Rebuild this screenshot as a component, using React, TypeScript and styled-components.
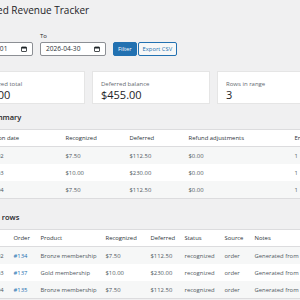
import React from 'react'
import styled, { createGlobalStyle } from 'styled-components'

const GlobalStyle = createGlobalStyle`
  html, body {
    margin: 0;
    padding: 0;
    background: #f0f0f1;
    overflow: hidden;
  }
  body {
    font-family: "Open Sans", "Noto Sans", sans-serif;
    color: #3c434a;
  }
`

const Wrap = styled.div`
  width: 380px;
  margin-left: -33px;
  padding-top: 3px;
`

const Title = styled.h1`
  margin: 0;
  font-size: 10px;
  line-height: 14px;
  font-weight: 400;
  color: #1d2327;
`

const FilterBar = styled.form`
  display: flex;
  align-items: flex-end;
  gap: 7px;
  margin-top: 15px;
`

const Field = styled.label`
  display: flex;
  flex-direction: column;
  gap: 2px;
  font-size: 6px;
  line-height: 8px;
  color: #1d2327;
`

const DateBox = styled.div`
  box-sizing: border-box;
  width: 66px;
  height: 14px;
  display: flex;
  align-items: center;
  justify-content: space-between;
  padding: 0 5px;
  background: #fff;
  border: 1px solid #8c8f94;
  border-radius: 2px;
  font-size: 6.6px;
  color: #2c3338;
`

const Buttons = styled.div`
  display: flex;
  gap: 1px;
`

const Button = styled.button<{ $primary?: boolean }>`
  box-sizing: border-box;
  height: 14px;
  padding: 0 4px;
  font-family: inherit;
  font-size: 5.8px;
  border-radius: 2px;
  border: 1px solid #2271b1;
  background: ${p => (p.$primary ? '#2271b1' : '#f6f7f7')};
  color: ${p => (p.$primary ? '#fff' : '#2271b1')};
`

const Cards = styled.div`
  display: grid;
  grid-template-columns: repeat(3, 118px);
  gap: 7px;
  margin-top: 15px;
`

const Card = styled.div`
  background: #fff;
  border: 1px solid #e5e5e5;
  padding: 8px 8px 0;
  height: 33px;
  box-sizing: border-box;
`

const CardLabel = styled.div`
  font-size: 6px;
  line-height: 8px;
  color: #646970;
`

const CardValue = styled.div`
  margin-top: 1px;
  font-size: 11px;
  line-height: 11px;
  color: #1d2327;
`

const Heading = styled.h2<{ $top: number }>`
  margin: ${p => p.$top}px 0 7px;
  font-size: 7.5px;
  line-height: 10px;
  font-weight: 600;
  color: #1d2327;
`

const Table = styled.table`
  width: 100%;
  table-layout: fixed;
  border-collapse: collapse;
  background: #fff;
  border: 1px solid #dcdcde;
  font-size: 5.9px;
`

const Th = styled.th<{ $w?: number }>`
  box-sizing: border-box;
  width: ${p => (p.$w ? `${p.$w}px` : 'auto')};
  height: 17px;
  padding: 0 5px;
  text-align: left;
  font-weight: 400;
  color: #2c3338;
  white-space: nowrap;
  border-bottom: 1px solid #dcdcde;
`

const Tr = styled.tr`
  &:nth-child(odd) {
    background: #f6f7f7;
  }
`

const Td = styled.td`
  height: 17px;
  padding: 0 5px;
  color: #50575e;
  white-space: nowrap;
  overflow: visible;
`

const OrderLink = styled.a`
  color: #2271b1;
  text-decoration: none;
`

const CalendarIcon = () => (
  <svg width="6" height="6" viewBox="0 0 12 12">
    <rect x="1" y="2" width="10" height="9" rx="1" fill="none" stroke="#1d2327" strokeWidth="1.6" />
    <rect x="1" y="2" width="10" height="3" fill="#1d2327" />
  </svg>
)

const summary = [
  { date: '2026-04-02', rec: '$7.50', def: '$112.50', refund: '$0.00', entries: '1' },
  { date: '2026-04-03', rec: '$10.00', def: '$230.00', refund: '$0.00', entries: '1' },
  { date: '2026-04-04', rec: '$7.50', def: '$112.50', refund: '$0.00', entries: '1' },
]

const rows = [
  { date: '2026-04-02', order: '#134', product: 'Bronze membership', rec: '$7.50', def: '$112.50' },
  { date: '2026-04-03', order: '#137', product: 'Gold membership', rec: '$10.00', def: '$230.00' },
  { date: '2026-04-04', order: '#135', product: 'Bronze membership', rec: '$7.50', def: '$112.50' },
]

export default function App() {
  return (
    <>
      <GlobalStyle />
      <Wrap>
        <Title>Deferred Revenue Tracker</Title>
        <FilterBar onSubmit={e => e.preventDefault()}>
          <Field>
            From
            <DateBox>
              <span>2026-04-01</span>
              <CalendarIcon />
            </DateBox>
          </Field>
          <Field>
            To
            <DateBox>
              <span>2026-04-30</span>
              <CalendarIcon />
            </DateBox>
          </Field>
          <Buttons>
            <Button $primary>Filter</Button>
            <Button type="button">Export CSV</Button>
          </Buttons>
        </FilterBar>
        <Cards>
          <Card>
            <CardLabel>Recognized total</CardLabel>
            <CardValue>$25.00</CardValue>
          </Card>
          <Card>
            <CardLabel>Deferred balance</CardLabel>
            <CardValue>$455.00</CardValue>
          </Card>
          <Card>
            <CardLabel>Rows in range</CardLabel>
            <CardValue>3</CardValue>
          </Card>
        </Cards>

        <Heading $top={8}>Daily summary</Heading>
        <Table>
          <thead>
            <tr>
              <Th $w={93}>Recognition date</Th>
              <Th $w={64}>Recognized</Th>
              <Th $w={59}>Deferred</Th>
              <Th $w={106}>Refund adjustments</Th>
              <Th>Entries</Th>
            </tr>
          </thead>
          <tbody>
            {summary.map(r => (
              <Tr key={r.date}>
                <Td>{r.date}</Td>
                <Td>{r.rec}</Td>
                <Td>{r.def}</Td>
                <Td>{r.refund}</Td>
                <Td>{r.entries}</Td>
              </Tr>
            ))}
          </tbody>
        </Table>

        <Heading $top={13}>Schedule rows</Heading>
        <Table>
          <thead>
            <tr>
              <Th $w={41}>Date</Th>
              <Th $w={27}>Order</Th>
              <Th $w={65}>Product</Th>
              <Th $w={45}>Recognized</Th>
              <Th $w={34}>Deferred</Th>
              <Th $w={40}>Status</Th>
              <Th $w={30}>Source</Th>
              <Th>Notes</Th>
            </tr>
          </thead>
          <tbody>
            {rows.map(r => (
              <Tr key={r.order}>
                <Td>{r.date}</Td>
                <Td><OrderLink href="#">{r.order}</OrderLink></Td>
                <Td>{r.product}</Td>
                <Td>{r.rec}</Td>
                <Td>{r.def}</Td>
                <Td>recognized</Td>
                <Td>order</Td>
                <Td>Generated from order</Td>
              </Tr>
            ))}
          </tbody>
        </Table>
      </Wrap>
    </>
  )
}
